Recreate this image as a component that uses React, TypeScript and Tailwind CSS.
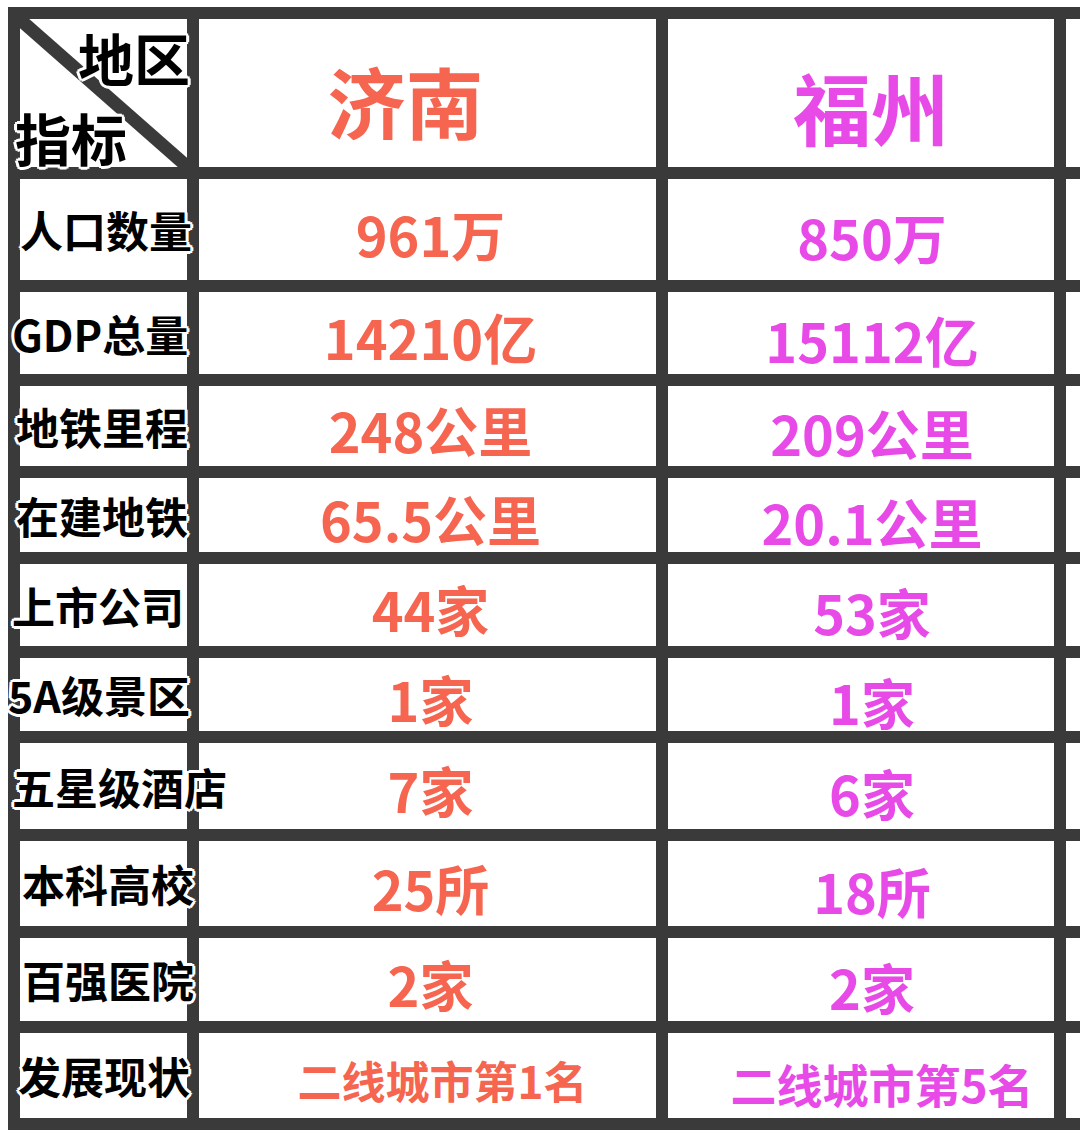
import { Fragment } from 'react'

const halo =
  '[text-shadow:3px_0_0_#fff,-3px_0_0_#fff,0_3px_0_#fff,0_-3px_0_#fff,2px_2px_0_#fff,-2px_-2px_0_#fff,2px_-2px_0_#fff,-2px_2px_0_#fff]'

interface Row {
  label: string
  shift: string
  jn: string
  fz: string
  small?: boolean
}

const rows: Row[] = [
  { label: '人口数量', shift: 'ml-0', jn: '961万', fz: '850万' },
  { label: 'GDP总量', shift: '-ml-2', jn: '14210亿', fz: '15112亿' },
  { label: '地铁里程', shift: '-ml-1', jn: '248公里', fz: '209公里' },
  { label: '在建地铁', shift: '-ml-1', jn: '65.5公里', fz: '20.1公里' },
  { label: '上市公司', shift: '-ml-2', jn: '44家', fz: '53家' },
  { label: '5A级景区', shift: '-ml-3', jn: '1家', fz: '1家' },
  { label: '五星级酒店', shift: '-ml-2', jn: '7家', fz: '6家' },
  { label: '本科高校', shift: 'ml-0.5', jn: '25所', fz: '18所' },
  { label: '百强医院', shift: 'ml-0.5', jn: '2家', fz: '2家' },
  { label: '发展现状', shift: '-ml-0.5', jn: '二线城市第1名', fz: '二线城市第5名', small: true },
]

function HeaderCorner() {
  return (
    <div className="relative bg-white flex flex-col justify-between">
      <svg className="absolute inset-0 w-full h-full" viewBox="0 0 167 148" preserveAspectRatio="none">
        <line x1="-4" y1="-3" x2="171" y2="151" stroke="#3a3a3a" strokeWidth="13" />
      </svg>
      <span className={`relative z-10 self-end mt-[10px] -mr-[3px] text-[56px] font-bold leading-none text-black ${halo}`}>
        地区
      </span>
      <span className={`relative z-10 self-start mb-[2px] -ml-[5px] text-[56px] font-bold leading-none text-black ${halo}`}>
        指标
      </span>
    </div>
  )
}

export default function App() {
  return (
    <div className="w-[1080px] h-[1139px] overflow-hidden bg-white pt-[7px] pl-[8px] font-['Noto_Sans_CJK_SC',sans-serif]">
      <div className="grid w-max grid-cols-[167px_457px_386px_100px] grid-rows-[148px_101px_82px_80px_74px_82px_73px_86px_85px_83px_85px] gap-[12px] p-[12px] bg-[#3a3a3a]">
        <HeaderCorner />
        <div className="bg-white flex items-center justify-center pt-[14px] pr-[44px]">
          <span className="text-[78px] font-bold leading-none text-[#f5654f]">济南</span>
        </div>
        <div className="bg-white flex items-center justify-center pt-[26px] pl-[20px]">
          <span className="text-[78px] font-bold leading-none text-[#e84ae8]">福州</span>
        </div>
        <div className="bg-white" />

        {rows.map((row) => (
          <Fragment key={row.label}>
            <div className="bg-white flex items-center">
              <span
                className={`relative z-10 whitespace-nowrap text-[43px] font-bold leading-none text-black ${halo} ${row.shift}`}
              >
                {row.label}
              </span>
            </div>
            <div className="bg-white flex items-center justify-center pt-[8px] pl-[6px]">
              <span
                className={`whitespace-nowrap font-bold leading-none text-[#f5654f] ${row.small ? 'text-[44px] pl-[24px]' : 'text-[54px]'}`}
              >
                {row.jn}
              </span>
            </div>
            <div className="bg-white flex items-center justify-center pt-[14px] pl-[22px]">
              <span
                className={`whitespace-nowrap font-bold leading-none text-[#e84ae8] ${row.small ? 'text-[46px] pl-[20px]' : 'text-[54px]'}`}
              >
                {row.fz}
              </span>
            </div>
            <div className="bg-white" />
          </Fragment>
        ))}
      </div>
    </div>
  )
}
